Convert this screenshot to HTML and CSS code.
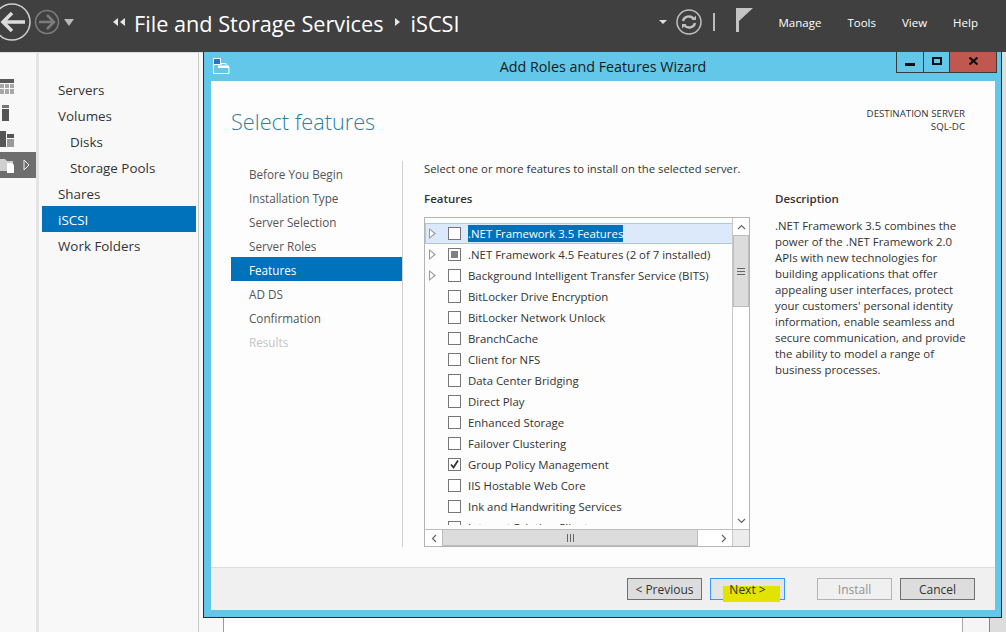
FILE: index.html
```html
<!DOCTYPE html>
<html lang="en">
<head>
    <meta charset="UTF-8">
    <title>Add Roles and Features Wizard</title>
    <link rel="stylesheet" href="styles.css">
</head>
<body>
    <header class="topbar">
        <div class="nav-arrows">
            <svg class="back" width="44" height="44" viewBox="0 0 44 44"><circle cx="12" cy="22" r="18" fill="none" stroke="#d0d0d0" stroke-width="1.5"/><path d="M2 22h23M12 13l-9 9 9 9" fill="none" stroke="#dcdcdc" stroke-width="3.5"/></svg>
            <svg class="forward" width="26" height="26" viewBox="0 0 26 26"><circle cx="13" cy="13" r="11.500" fill="none" stroke="#7c7c7c" stroke-width="1.500"/><path d="M5 13h15M13 6l7 7-7 7" fill="none" stroke="#7c7c7c" stroke-width="2.500"/></svg>
            <span class="tri-down big"></span>
        </div>
        <div class="crumbs">
            <svg class="dbl" width="12" height="8" viewBox="0 0 12 8"><path d="M5 0v8L0 4zM12 0v8L7 4z" fill="#e8e8e8"/></svg>
            <span class="crumb">File and Storage Services</span>
            <svg class="sep" width="5" height="8" viewBox="0 0 5 8"><path d="M0 0l5 4-5 4z" fill="#e8e8e8"/></svg>
            <span class="crumb">iSCSI</span>
        </div>
        <div class="tools">
            <span class="tri-down"></span>
            <svg class="refresh" width="26" height="26" viewBox="0 0 26 26"><circle cx="13" cy="13" r="12" fill="none" stroke="#c0c0c0" stroke-width="1.500"/><path d="M7 12a6 5.500 0 0 1 10.500-2.500M19 14a6 5.500 0 0 1-10.500 2.500" fill="none" stroke="#c0c0c0" stroke-width="2.400"/><path d="M15.500 11H20V6.500zM10.500 15H6v4.500z" fill="#c0c0c0"/></svg>
            <span class="pipe"></span>
            <svg class="flag" width="18" height="24" viewBox="0 0 18 24"><path d="M0 0h3v24H0z" fill="#c4c4c4"/><path d="M3 0h14L3 13z" fill="#c4c4c4"/></svg>
            <nav class="menu">
                <span>Manage</span>
                <span>Tools</span>
                <span>View</span>
                <span>Help</span>
            </nav>
        </div>
    </header>

    <div class="shell">
        <aside class="rail">
            <div class="rail-item">
                <svg width="15" height="16" viewBox="0 0 15 16"><path d="M0 0h14v4H0z" fill="#5a5a5a"/><path d="M0 5h4v4H0zM5 5h4v4H5zM10 5h4v4h-4zM0 10h4v5H0zM5 10h4v5H5zM10 10h4v5h-4z" fill="#a8a8a8"/></svg>
            </div>
            <div class="rail-item">
                <svg width="15" height="16" viewBox="0 0 15 16"><path d="M2 0h7v3H2z" fill="#777"/><path d="M2 4h7v12H2z" fill="#555"/></svg>
            </div>
            <div class="rail-item">
                <svg width="15" height="16" viewBox="0 0 15 16"><path d="M0 0h6v16H0z" fill="#555"/><path d="M7 3h7v4H7z" fill="#555"/><path d="M7 8h7v8H7z" fill="#999"/></svg>
            </div>
            <div class="rail-item active">
                <svg width="16" height="17" viewBox="0 0 16 17"><path d="M0 2h5l2 2h6v10H0z" fill="#d0d0d0"/><path d="M7 6h5l2 2v8H7z" fill="#fff"/></svg>
                <svg class="rail-arrow" width="7" height="12" viewBox="0 0 7 12"><path d="M1 1l5 5-5 5z" fill="none" stroke="#eee"/></svg>
            </div>
        </aside>
        <nav class="sidenav">
            <a>Servers</a>
            <a>Volumes</a>
            <a class="sub">Disks</a>
            <a class="sub">Storage Pools</a>
            <a>Shares</a>
            <a class="selected">iSCSI</a>
            <a>Work Folders</a>
        </nav>
        <div class="content">
            <div class="panel"></div>
            <div class="panel-side"></div>
            <div class="panel-edge"></div>
        </div>
    </div>

    <section class="window">
        <div class="titlebar">
            <svg class="app-icon" width="17" height="16" viewBox="0 0 17 16"><path d="M.5.5h7v6h-7z" fill="#1f78c8" stroke="#fff"/><path d="M.5 7v8.500h15.500V9H5" fill="none" stroke="#fff"/><path d="M5 7.500h11v2.500H5z" fill="#fff"/><path d="M8 7V5.500h5V7" fill="none" stroke="#fff"/></svg>
            <span class="title">Add Roles and Features Wizard</span>
            <div class="controls">
                <span class="ctl ctl-min"><i></i></span>
                <span class="ctl ctl-max"><i></i></span>
                <span class="ctl ctl-close"><svg width="9" height="8" viewBox="0 0 9 8"><path d="M.5.5l8 7M8.500.5l-8 7" stroke="#111" stroke-width="2.200"/></svg></span>
            </div>
        </div>
        <div class="client">
            <div class="wiz-body">
                <div class="wiz-head">
                    <h1>Select features</h1>
                    <div class="dest">DESTINATION SERVER<br>SQL-DC</div>
                </div>
                <div class="wiz-main">
                    <ul class="steps">
                        <li>Before You Begin</li>
                        <li>Installation Type</li>
                        <li>Server Selection</li>
                        <li>Server Roles</li>
                        <li class="current">Features</li>
                        <li>AD DS</li>
                        <li>Confirmation</li>
                        <li class="off">Results</li>
                    </ul>
                    <div class="pane">
                        <p class="intro">Select one or more features to install on the selected server.</p>
                        <div class="columns">
                            <div class="features">
                                <h2>Features</h2>
                                <div class="listbox">
                                    <div class="rows">
                                        <div class="row focus"><span class="expander"></span><span class="box"></span><span class="label">.NET Framework 3.5 Features</span></div>
                                        <div class="row"><span class="expander"></span><span class="box partial"></span><span class="label">.NET Framework 4.5 Features (2 of 7 installed)</span></div>
                                        <div class="row"><span class="expander"></span><span class="box"></span><span class="label">Background Intelligent Transfer Service (BITS)</span></div>
                                        <div class="row"><span class="box"></span><span class="label">BitLocker Drive Encryption</span></div>
                                        <div class="row"><span class="box"></span><span class="label">BitLocker Network Unlock</span></div>
                                        <div class="row"><span class="box"></span><span class="label">BranchCache</span></div>
                                        <div class="row"><span class="box"></span><span class="label">Client for NFS</span></div>
                                        <div class="row"><span class="box"></span><span class="label">Data Center Bridging</span></div>
                                        <div class="row"><span class="box"></span><span class="label">Direct Play</span></div>
                                        <div class="row"><span class="box"></span><span class="label">Enhanced Storage</span></div>
                                        <div class="row"><span class="box"></span><span class="label">Failover Clustering</span></div>
                                        <div class="row"><span class="box checked"><svg width="11" height="11" viewBox="0 0 11 11"><path d="M2 5.500l2.500 3L9 1.500" fill="none" stroke="#333" stroke-width="1.800"/></svg></span><span class="label">Group Policy Management</span></div>
                                        <div class="row"><span class="box"></span><span class="label">IIS Hostable Web Core</span></div>
                                        <div class="row"><span class="box"></span><span class="label">Ink and Handwriting Services</span></div>
                                        <div class="row"><span class="box"></span><span class="label">Internet Printing Client</span></div>
                                    </div>
                                    <div class="vscroll">
                                        <span class="sbtn"><svg width="9" height="6" viewBox="0 0 9 6"><path d="M1 5l3.500-3.500L8 5" fill="none" stroke="#666" stroke-width="1.200"/></svg></span>
                                        <span class="vthumb"><svg width="8" height="7" viewBox="0 0 8 7"><path d="M0 .5h8M0 3.500h8M0 6.500h8" stroke="#666"/></svg></span>
                                        <span class="vtrack"></span>
                                        <span class="sbtn"><svg width="9" height="6" viewBox="0 0 9 6"><path d="M1 1l3.500 3.500L8 1" fill="none" stroke="#666" stroke-width="1.200"/></svg></span>
                                    </div>
                                    <div class="hscroll">
                                        <span class="sbtn"><svg width="6" height="9" viewBox="0 0 6 9"><path d="M5 1L1.500 4.500 5 8" fill="none" stroke="#666" stroke-width="1.200"/></svg></span>
                                        <span class="hthumb"><svg width="7" height="8" viewBox="0 0 7 8"><path d="M.5 0v8M3.500 0v8M6.500 0v8" stroke="#666"/></svg></span>
                                        <span class="htrack"></span>
                                        <span class="sbtn"><svg width="6" height="9" viewBox="0 0 6 9"><path d="M1 1l3.500 3.500L1 8" fill="none" stroke="#666" stroke-width="1.200"/></svg></span>
                                    </div>
                                    <div class="corner"></div>
                                </div>
                            </div>
                            <div class="description">
                                <h2>Description</h2>
                                <p>.NET Framework 3.5 combines the power of the .NET Framework 2.0 APIs with new technologies for building applications that offer appealing user interfaces, protect your customers' personal identity information, enable seamless and secure communication, and provide the ability to model a range of business processes.</p>
                            </div>
                        </div>
                    </div>
                </div>
            </div>
            <div class="wiz-foot">
                <button class="btn">&lt; Previous</button>
                <button class="btn next"><span class="next-text">Next &gt;</span></button>
                <button class="btn disabled">Install</button>
                <button class="btn">Cancel</button>
            </div>
        </div>
    </section>
</body>
</html>
```
FILE: styles.css
```css
*{
    margin: 0;
    padding: 0;
    box-sizing: border-box;
    font-family: "Open Sans", "Noto Sans", sans-serif;
}
html, body{
    width: 1006px;
    height: 632px;
    overflow: hidden;
}
body{
    background-color: #f8f8f8;
    position: relative;
    font-size: 12px;
    color: #333;
}
.topbar{
    height: 52px;
    background-color: #404040;
    display: flex;
    align-items: center;
    color: #fff;
    padding-bottom: 8px;
}
.nav-arrows{
    width: 113px;
    display: flex;
    align-items: center;
    flex-shrink: 0;
}
.forward{
    margin-left: -10px;
}
.tri-down{
    width: 0;
    height: 0;
    border-left: 4px solid transparent;
    border-right: 4px solid transparent;
    border-top: 4px solid #e0e0e0;
}
.tri-down.big{
    margin-left: 4px;
    border-left-width: 5px;
    border-right-width: 5px;
    border-top-width: 7px;
    border-top-color: #b8b8b8;
}
.crumbs{
    display: flex;
    align-items: center;
    font-size: 21.7px;
    flex: 1;
    padding-top: 2px;
}
.dbl{
    margin-right: 9px;
    margin-bottom: 2px;
}
.sep{
    margin: 0 11px 2px 11px;
}
.tools{
    display: flex;
    align-items: center;
}
.refresh{
    margin-left: 9px;
}
.pipe{
    width: 2px;
    height: 18px;
    background-color: #bbb;
    margin-left: 11px;
}
.flag{
    margin-left: 21px;
    margin-bottom: 4px;
}
.menu{
    display: flex;
    gap: 26px;
    margin-left: 25px;
    margin-right: 28px;
    font-size: 11.5px;
}
.shell{
    display: flex;
    height: 580px;
    border-top: 1px solid #ddd;
}
.rail{
    width: 39px;
    padding-top: 25px;
    display: flex;
    flex-direction: column;
    gap: 8px;
    border-right: 3px solid #e4e4e4;
    flex-shrink: 0;
}
.rail-item{
    height: 18px;
    display: flex;
    align-items: center;
}
.rail-item.active{
    height: 26px;
    background-color: #6e6e6e;
    margin-top: -4px;
    justify-content: space-between;
    padding-right: 6px;
}
.rail-arrow{
    flex-shrink: 0;
}
.sidenav{
    width: 159px;
    padding: 23px 2px 0 3px;
    display: flex;
    flex-direction: column;
    font-size: 13.4px;
    flex-shrink: 0;
}
.sidenav a{
    height: 26px;
    line-height: 28px;
    padding-left: 16px;
}
.sidenav a.sub{
    padding-left: 28px;
}
.sidenav a.selected{
    background-color: #0072bc;
    color: #fff;
}
.content{
    flex: 1;
    border-left: 1px solid #c8c8c8;
    padding-left: 24px;
    display: flex;
}
.panel{
    flex: 1;
    background-color: #fff;
    border-left: 1px solid #999;
    border-right: 1px solid #aaa;
}
.panel-side{
    width: 26px;
    background-color: #f5f5f5;
}
.panel-edge{
    width: 17px;
    background-color: #ddd;
    border-left: 1px solid #888;
}
.window{
    position: absolute;
    left: 203px;
    top: 52px;
    width: 799px;
    height: 566px;
    background-color: #63c7ea;
    border: 1px solid #2c2c2c;
    border-top: 0;
    padding: 0 6px 7px 7px;
    display: flex;
    flex-direction: column;
}
.titlebar{
    height: 29px;
    display: flex;
    align-items: center;
    position: relative;
    justify-content: center;
    flex-shrink: 0;
    padding-bottom: 1px;
}
.app-icon{
    position: absolute;
    left: 2px;
    top: 6px;
}
.title{
    font-size: 14.3px;
    color: #1a1a1a;
}
.controls{
    position: absolute;
    right: -2px;
    top: 0;
    height: 21px;
    display: flex;
    border: 1px solid #3a3a3a;
    border-top: 0;
}
.ctl{
    display: flex;
    align-items: center;
    justify-content: center;
    width: 27px;
}
.ctl-min{
    border-right: 1px solid #3a3a3a;
}
.ctl-min i{
    display: block;
    width: 10px;
    height: 3px;
    background-color: #111;
    margin-top: 5px;
}
.ctl-max{
    width: 26px;
    border-right: 1px solid #3a3a3a;
}
.ctl-max i{
    display: block;
    width: 10px;
    height: 8px;
    border: 2px solid #111;
    margin-bottom: 3px;
}
.ctl-close{
    width: 46px;
    background-color: #c0584f;
    padding-bottom: 3px;
}
.client{
    flex: 1;
    background-color: #fff;
    display: flex;
    flex-direction: column;
}
.wiz-body{
    flex: 1;
    background-color: #fdfdfd;
    padding: 0 20px;
    display: flex;
    flex-direction: column;
}
.wiz-head{
    height: 78px;
    display: flex;
    justify-content: space-between;
}
h1{
    font-size: 21.7px;
    font-weight: 300;
    color: #2a7fa5;
    margin-top: 26px;
}
.dest{
    font-size: 9.7px;
    text-align: right;
    line-height: 13px;
    margin-top: 26px;
    margin-right: 10px;
}
.wiz-main{
    flex: 1;
    display: flex;
}
.steps{
    list-style: none;
    width: 171px;
    padding-top: 2px;
    font-size: 11.7px;
    color: #555;
}
.steps li{
    height: 24px;
    line-height: 26px;
    padding-left: 18px;
}
.steps .current{
    background-color: #0072bc;
    color: #fff;
}
.steps .off{
    color: #c4c4c4;
}
.pane{
    flex: 1;
    border-left: 1px solid #d0d0d0;
    padding-left: 21px;
    height: 386px;
    margin-top: 2px;
}
.intro{
    font-size: 11.3px;
    line-height: 16px;
}
.columns{
    display: flex;
    margin-top: 14px;
    gap: 25px;
}
.features{
    width: 326px;
    flex-shrink: 0;
}
h2{
    font-size: 11.5px;
    font-weight: 600;
    line-height: 16px;
    margin-bottom: 11px;
}
.features h2{
    margin-bottom: 10px;
}
.listbox{
    height: 330px;
    border: 1px solid #b4b4b4;
    display: grid;
    grid-template-columns: 307px 17px;
    grid-template-rows: 311px 17px;
}
.rows{
    overflow: hidden;
    padding-top: 5px;
    margin-bottom: 4px;
}
.row{
    height: 21px;
    display: flex;
    align-items: center;
    padding-left: 23px;
    position: relative;
    font-size: 11.4px;
}
.row.focus{
    background-color: #dbe9fa;
    border: 1px solid #a9c9ea;
    border-right: 0;
    padding-left: 22px;
}
.label{
    line-height: 17px;
    white-space: nowrap;
}
.row.focus .label{
    background-color: #0072bc;
    color: #fff;
}
.expander{
    position: absolute;
    left: 4px;
    top: 5px;
    width: 7px;
    height: 11px;
    clip-path: polygon(0 0, 100% 50%, 0 100%);
    background-color: #9a9a9a;
}
.row.focus .expander{
    left: 3px;
    top: 4px;
}
.expander::after{
    content: "";
    display: block;
    margin: 2px 0 0 1px;
    width: 4px;
    height: 7px;
    clip-path: polygon(0 0, 100% 50%, 0 100%);
    background-color: #fff;
}
.box{
    width: 13px;
    height: 13px;
    border: 1px solid #767676;
    background-color: #fff;
    margin-right: 7px;
    flex-shrink: 0;
    display: flex;
    align-items: center;
    justify-content: center;
}
.box.partial::before{
    content: "";
    width: 7px;
    height: 7px;
    background-color: #808080;
}
.vscroll{
    display: flex;
    flex-direction: column;
    border-left: 1px solid #c8c8c8;
}
.sbtn{
    flex-shrink: 0;
    display: flex;
    align-items: center;
    justify-content: center;
    background-color: #fff;
}
.vscroll .sbtn{
    height: 17px;
}
.vthumb{
    height: 72px;
    background-color: #dcdcdc;
    border: 1px solid #bcbcbc;
    display: flex;
    align-items: center;
    justify-content: center;
}
.vtrack, .htrack{
    flex: 1;
    background-color: #fff;
}
.hscroll{
    display: flex;
    border-top: 1px solid #bcbcbc;
}
.hscroll .sbtn{
    width: 17px;
}
.hthumb{
    width: 256px;
    background-color: #dcdcdc;
    border: 1px solid #bcbcbc;
    border-top: 0;
    display: flex;
    align-items: center;
    justify-content: center;
}
.corner{
    background-color: #ececec;
    border-top: 1px solid #bcbcbc;
    border-left: 1px solid #c8c8c8;
}
.description{
    width: 195px;
    flex-shrink: 0;
}
.description p{
    font-size: 11.4px;
    line-height: 16px;
}
.wiz-foot{
    height: 43px;
    background-color: #f0f0f0;
    border-top: 1px solid #dcdcdc;
    display: flex;
    align-items: flex-start;
    padding-top: 10px;
    padding-right: 20px;
    justify-content: flex-end;
    gap: 8px;
    flex-shrink: 0;
}
.btn{
    width: 75px;
    height: 22px;
    background-color: #dddddd;
    border: 1px solid #707070;
    font-size: 12px;
    color: #333;
}
.btn.next{
    background-color: #e4e4e4;
    border-color: #3399ff;
    margin-right: 24px;
    position: relative;
}
/* yellow marker over the button, runs past its bottom edge */
.btn.next::before{
    content: "";
    position: absolute;
    left: 12px;
    top: 7px;
    width: 57px;
    height: 16px;
    background-color: #e3e300;
}
.next-text{
    position: relative;
}
.btn.disabled{
    background-color: #f0f0f0;
    border-color: #b4b4b4;
    color: #909090;
}
```
